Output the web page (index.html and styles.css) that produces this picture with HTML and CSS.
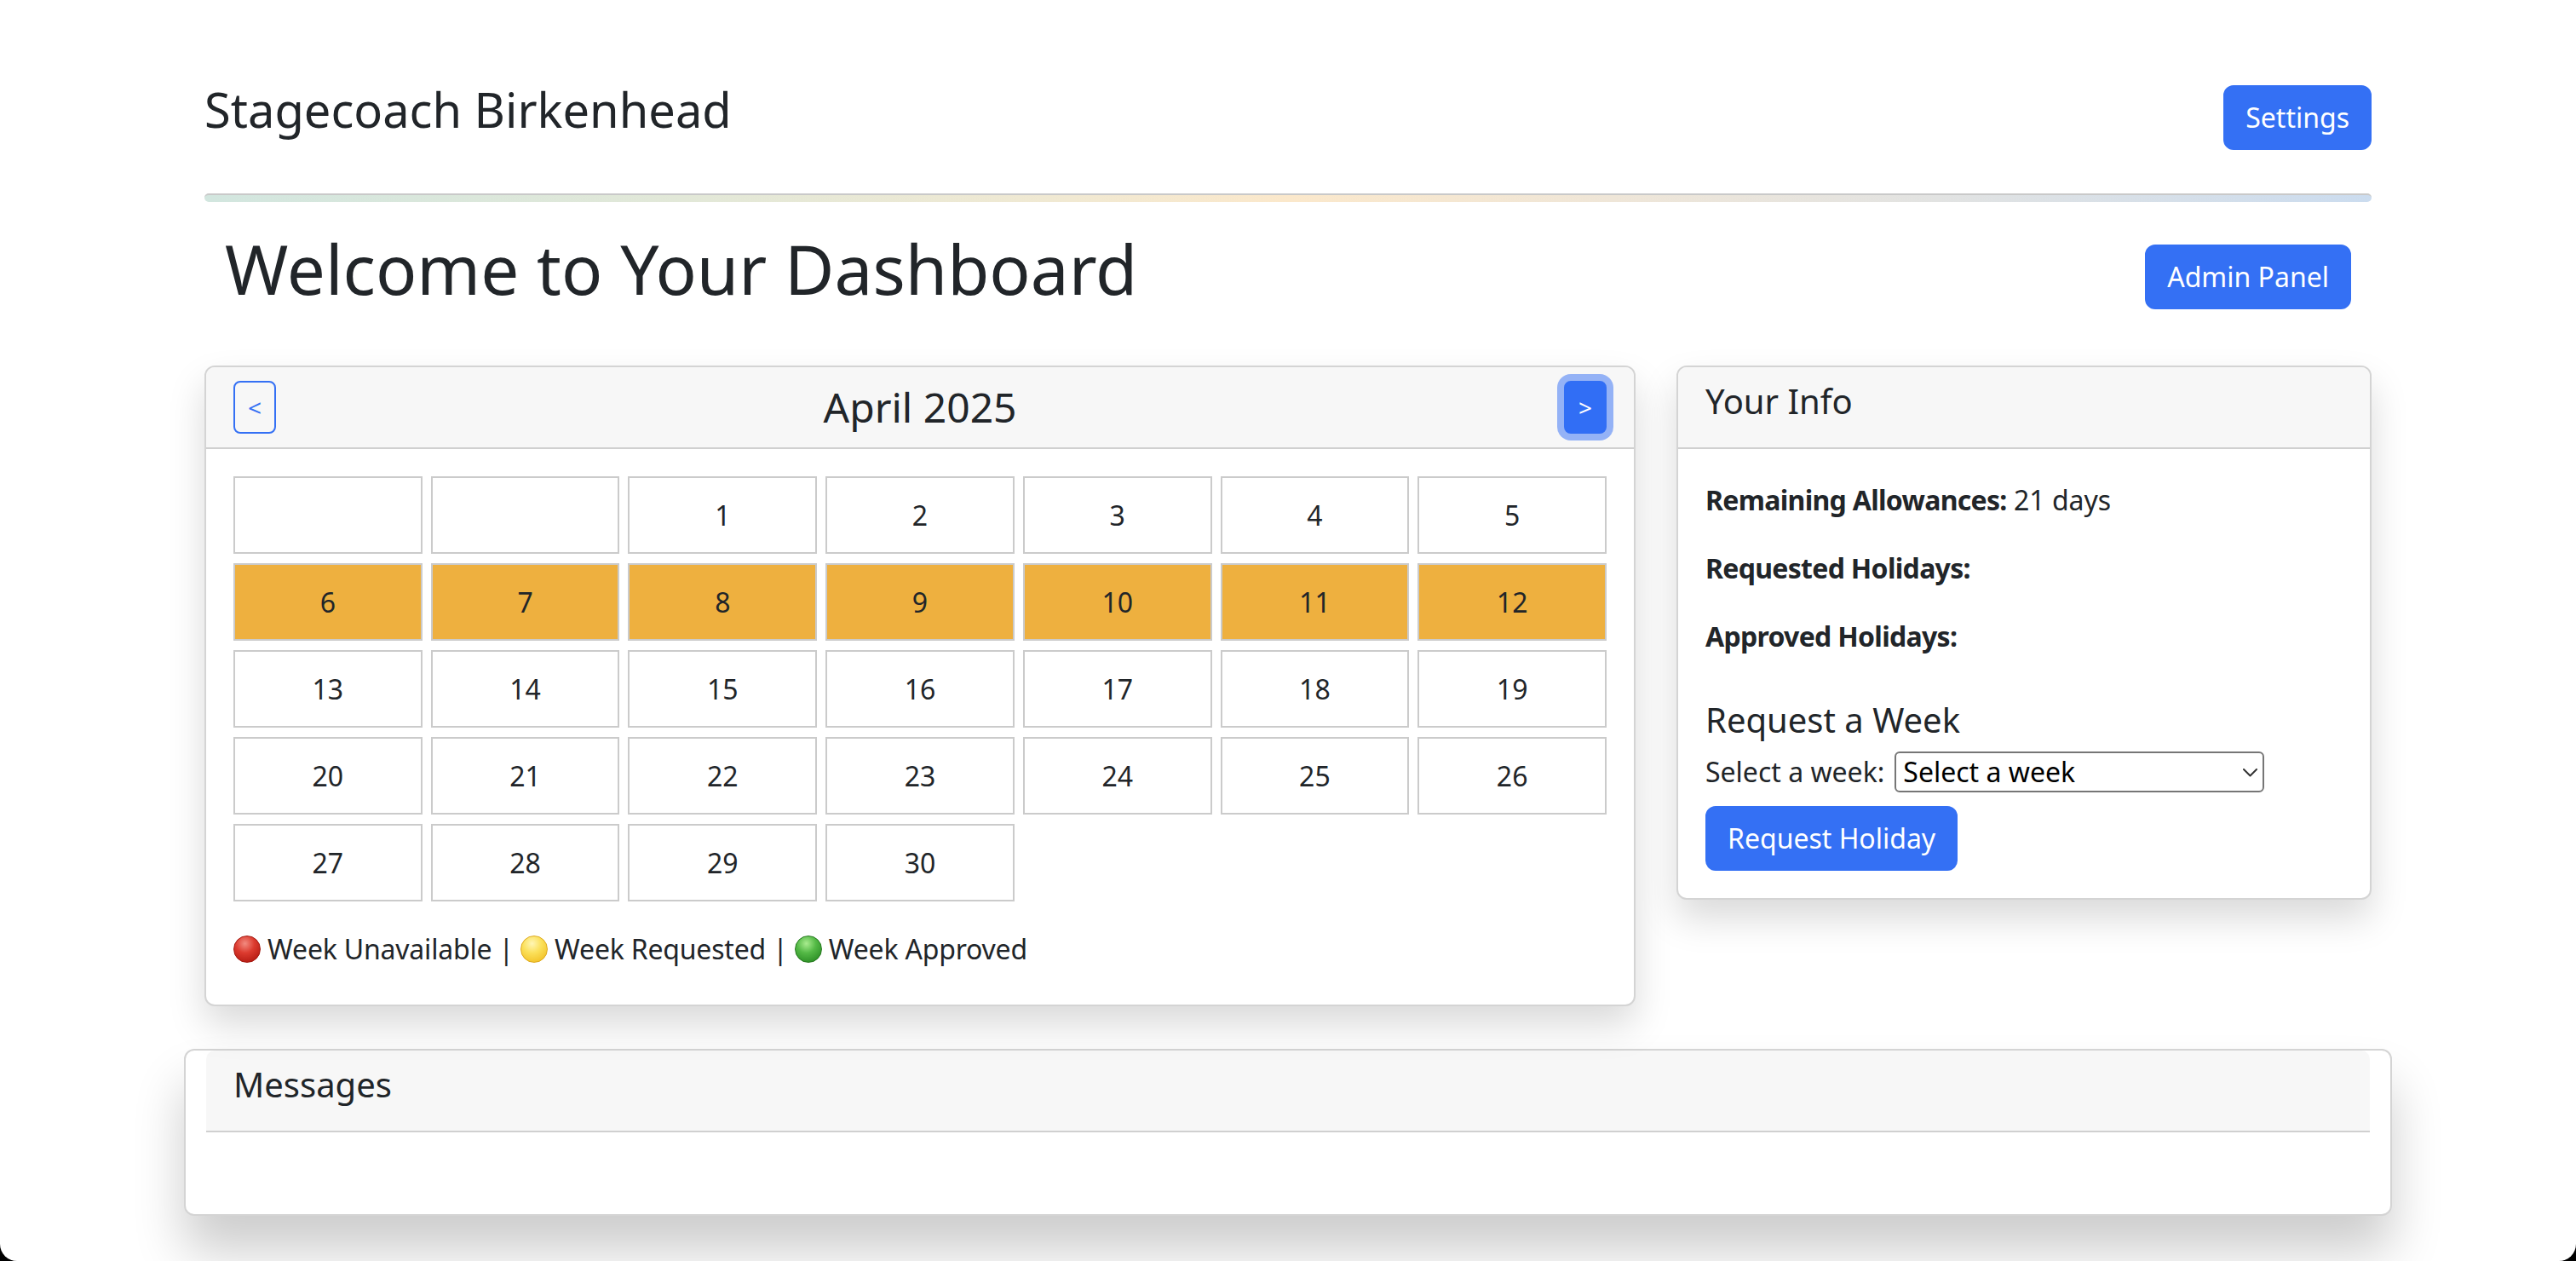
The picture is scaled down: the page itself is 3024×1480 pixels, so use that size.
FILE: index.html
```html
<!DOCTYPE html>
<html lang="en">
<head>
<meta charset="utf-8">
<title>Dashboard - Stagecoach Birkenhead</title>
<link rel="stylesheet" href="styles.css">
</head>
<body>
<div class="page">
  <div class="container">
    <header class="topbar">
      <h3 class="brand">Stagecoach Birkenhead</h3>
      <button class="btn btn-primary btn-settings">Settings</button>
    </header>
    <div class="rule"></div>

    <div class="title-row">
      <h1 class="title">Welcome to Your Dashboard</h1>
      <button class="btn btn-primary">Admin Panel</button>
    </div>

    <div class="cards-row">
      <section class="card cal-card">
        <div class="card-header cal-header">
          <button class="btn-sm btn-outline">&lt;</button>
          <h4 class="month">April 2025</h4>
          <button class="btn-sm btn-filled">&gt;</button>
        </div>
        <div class="card-body cal-body">
          <div class="cal-grid">
            <div class="day empty"></div>
            <div class="day empty"></div>
            <div class="day">1</div>
            <div class="day">2</div>
            <div class="day">3</div>
            <div class="day">4</div>
            <div class="day">5</div>
            <div class="day requested">6</div>
            <div class="day requested">7</div>
            <div class="day requested">8</div>
            <div class="day requested">9</div>
            <div class="day requested">10</div>
            <div class="day requested">11</div>
            <div class="day requested">12</div>
            <div class="day">13</div>
            <div class="day">14</div>
            <div class="day">15</div>
            <div class="day">16</div>
            <div class="day">17</div>
            <div class="day">18</div>
            <div class="day">19</div>
            <div class="day">20</div>
            <div class="day">21</div>
            <div class="day">22</div>
            <div class="day">23</div>
            <div class="day">24</div>
            <div class="day">25</div>
            <div class="day">26</div>
            <div class="day">27</div>
            <div class="day">28</div>
            <div class="day">29</div>
            <div class="day">30</div>
          </div>
          <p class="legend"><span class="dot dot-red"></span> Week Unavailable | <span class="dot dot-yellow"></span> Week Requested | <span class="dot dot-green"></span> Week Approved</p>
        </div>
      </section>

      <section class="card info-card">
        <div class="card-header info-header">
          <h5 class="card-title">Your Info</h5>
        </div>
        <div class="card-body info-body">
          <p class="info-line"><strong>Remaining Allowances:</strong> 21 days</p>
          <p class="info-line"><strong>Requested Holidays:</strong></p>
          <p class="info-line"><strong>Approved Holidays:</strong></p>
          <h5 class="request-title">Request a Week</h5>
          <div class="select-row">
            <label class="select-label" for="week">Select a week:</label>
            <span class="select-wrap">
              <select id="week" class="week-select"><option>Select a week</option></select>
              <svg class="chevron" width="17" height="10" viewBox="0 0 17 10"><path d="M1 1 L8.5 8.5 L16 1" fill="none" stroke="#333" stroke-width="2" stroke-linecap="round" stroke-linejoin="round"/></svg>
            </span>
          </div>
          <button class="btn btn-primary btn-request">Request Holiday</button>
        </div>
      </section>
    </div>

    <section class="card messages-card">
      <div class="card-header messages-header">
        <h5 class="card-title">Messages</h5>
      </div>
      <div class="messages-body"></div>
    </section>
  </div>
</div>
</body>
</html>
```
FILE: styles.css
```css
html, body {
  margin: 0;
  padding: 0;
  background: #000;
  overflow: hidden;
}

.page {
  height: 1480px;
  background: #fff;
  border-radius: 0 0 20px 20px;
  overflow: hidden;
  font-family: "Noto Sans", "Open Sans", sans-serif;
  color: #212529;
}

.container {
  width: 2592px;
  margin: 0 auto;
  padding: 0 24px;
  box-sizing: border-box;
}

/* Top bar */
.topbar {
  display: flex;
  justify-content: space-between;
  align-items: flex-start;
  padding-top: 95px;
}

.brand {
  margin: 0;
  font-size: 56px;
  font-weight: 400;
  line-height: 1.2;
}

.btn {
  font-family: inherit;
  font-size: 32px;
  line-height: 48px;
  padding: 12px 24px;
  border-radius: 12px;
  border: 2px solid transparent;
  cursor: pointer;
}

.btn-primary {
  background: #3470f4;
  border-color: #3470f4;
  color: #fff;
}

.btn-settings {
  margin-top: 5px;
}

.rule {
  margin-top: 51px;
  height: 8px;
  border-top: 2px solid #c9c9c9;
  border-radius: 5px;
  background: linear-gradient(90deg, #d2e6df 0%, #e2e8d8 22%, #f1e9d2 40%, #fbe8cb 50%, #efe6d8 65%, #e2e3e2 80%, #cbdcef 100%);
}

/* Title row */
.title-row {
  margin-top: 30px;
  padding: 0 24px;
  display: flex;
  justify-content: space-between;
  align-items: flex-end;
}

.title {
  margin: 0;
  font-size: 80px;
  font-weight: 400;
  line-height: 1.2;
}

/* Cards */
.cards-row {
  margin-top: 66px;
  display: flex;
  gap: 48px;
  align-items: flex-start;
}

.card {
  background: #fff;
  border: 2px solid #d4d4d4;
  border-radius: 12px;
  box-shadow: 0 22px 44px rgba(0, 0, 0, 0.15);
  box-sizing: border-box;
}

.cal-card {
  width: 1680px;
  flex: none;
}

.info-card {
  width: 816px;
  flex: none;
}

.card-header {
  height: 96px;
  box-sizing: border-box;
  background: #f7f7f7;
  border-bottom: 2px solid #d0d0d0;
  padding: 0 32px;
  border-radius: 10px 10px 0 0;
}

.cal-header {
  display: flex;
  align-items: center;
  justify-content: space-between;
}

.month {
  margin: 0;
  font-size: 48px;
  font-weight: 400;
  line-height: 1.2;
}

.btn-sm {
  font-family: inherit;
  font-size: 28px;
  line-height: 42px;
  padding: 8px 15px;
  border-radius: 8px;
  border: 2px solid #3470f4;
}

.btn-outline {
  background: transparent;
  color: #3470f4;
}

.btn-filled {
  background: #316ef5;
  border-color: #316ef5;
  color: #fff;
  box-shadow: 0 0 0 8px rgba(49, 110, 245, 0.5);
}

.card-body {
  padding: 32px;
}

.cal-body {
  padding-bottom: 32px;
}

.cal-grid {
  display: grid;
  grid-template-columns: repeat(7, 1fr);
  column-gap: 10px;
  row-gap: 11px;
}

.day {
  height: 91px;
  box-sizing: border-box;
  border: 2px solid #cbcbcb;
  background: #fff;
  display: flex;
  align-items: center;
  justify-content: center;
  font-size: 32px;
}

.day.requested {
  background: #eeb03f;
}

.legend {
  margin: 32px 0 9px;
  font-size: 32px;
  line-height: 48px;
  letter-spacing: -0.2px;
}

.dot {
  display: inline-block;
  width: 32px;
  height: 32px;
  border-radius: 50%;
  vertical-align: -4px;
  box-sizing: border-box;
}

.dot-red {
  background: radial-gradient(circle at 42% 28%, #f28b80 0%, #dc3b2f 40%, #b81d14 80%, #9c130c 100%);
  border: 1px solid #a3170f;
}

.dot-yellow {
  background: radial-gradient(circle at 42% 28%, #fff6b5 0%, #fbe05a 40%, #f3c52c 80%, #e2a91d 100%);
  border: 1px solid #deaa1e;
}

.dot-green {
  background: radial-gradient(circle at 42% 28%, #a9ec8f 0%, #54b946 40%, #2f9228 80%, #1f7419 100%);
  border: 1px solid #277a20;
}

/* Info card */
.info-header {
  padding-top: 16px;
}

.card-title {
  margin: 0;
  font-size: 40px;
  font-weight: 400;
  line-height: 48px;
}

.info-body {
  padding-top: 36px;
}

.info-line {
  margin: 0 0 32px;
  font-size: 32px;
  line-height: 48px;
}

.info-line strong {
  font-weight: 700;
  letter-spacing: -0.7px;
}

.request-title {
  margin: 50px 0 13px;
  font-size: 40px;
  font-weight: 400;
  line-height: 48px;
}

.select-row {
  display: flex;
  align-items: center;
  font-size: 32px;
  line-height: 48px;
}

.select-wrap {
  position: relative;
  display: inline-block;
  margin-left: 12px;
}

.week-select {
  appearance: none;
  -webkit-appearance: none;
  width: 434px;
  height: 48px;
  box-sizing: border-box;
  border: 2px solid #767676;
  border-radius: 6px;
  background: #fff;
  color: #000;
  font-family: "Noto Sans", "Open Sans", sans-serif;
  font-size: 32px;
  line-height: 44px;
  padding: 0 40px 0 8px;
  display: block;
}

.chevron {
  position: absolute;
  right: 8px;
  top: 20px;
  pointer-events: none;
}

.btn-request {
  margin-top: 16px;
}

/* Messages */
.messages-card {
  margin: 50px -24px 0;
  padding: 0 24px;
  box-shadow: 0 42px 60px rgba(0, 0, 0, 0.2);
}

.messages-header {
  padding-top: 16px;
}

.messages-body {
  height: 96px;
}
```
